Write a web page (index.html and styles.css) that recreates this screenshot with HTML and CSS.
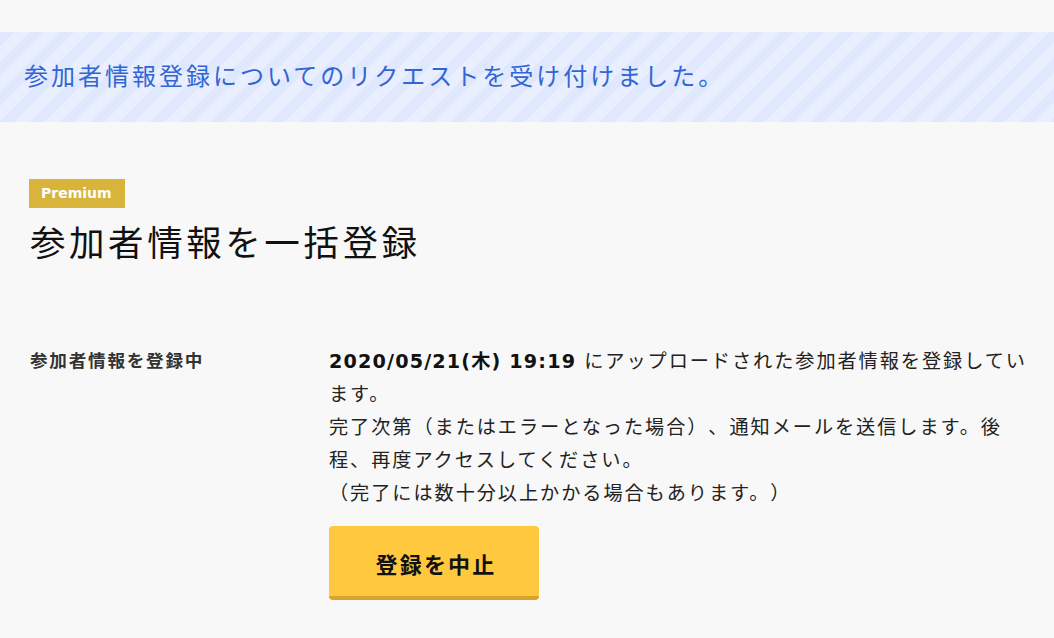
FILE: index.html
```html
<!DOCTYPE html>
<html lang="ja">
<head>
<meta charset="utf-8">
<title>参加者情報を一括登録</title>
<link rel="stylesheet" href="styles.css">
</head>
<body>
  <div class="notice">
    <p class="notice-text">参加者情報登録についてのリクエストを受け付けました。</p>
  </div>
  <main class="page">
    <span class="badge">Premium</span>
    <h1 class="title">参加者情報を一括登録</h1>
    <section class="row">
      <div class="row-label">参加者情報を登録中</div>
      <div class="row-body">
        <p class="desc"><b class="stamp">2020/05/21(木) 19:19</b> にアップロードされた参加者情報を登録しています。<br>完了次第（またはエラーとなった場合）、通知メールを送信します。後程、再度アクセスしてください。<br>（完了には数十分以上かかる場合もあります。）</p>
        <button class="btn-cancel" type="button">登録を中止</button>
      </div>
    </section>
  </main>
</body>
</html>
```
FILE: styles.css
```css
html, body {
  margin: 0;
  padding: 0;
  background: #f8f8f8;
}
body {
  font-family: "DejaVu Sans", "Noto Sans CJK JP", sans-serif;
  color: #222;
  text-spacing-trim: space-all;
}
.notice {
  margin-top: 32px;
  height: 90px;
  box-sizing: border-box;
  display: flex;
  align-items: center;
  padding: 0 24px;
  background: repeating-linear-gradient(135deg, #dfe8fd 0 10.6px, #e9effe 10.6px 21.2px);
}
.notice-text {
  margin: 0;
  font-size: 24px;
  line-height: 36px;
  letter-spacing: 3px;
  color: #3165d6;
}
.page {
  padding: 57px 14px 0 30px;
}
.badge {
  display: inline-block;
  height: 29px;
  line-height: 29px;
  padding: 0 13px 0 12px;
  background: #d8b43b;
  color: #fff;
  font-weight: bold;
  font-size: 14px;
  letter-spacing: 0;
  margin-left: -1px;
}
.title {
  margin: 11px 0 0;
  font-size: 35.5px;
  line-height: 49px;
  letter-spacing: 0.1em;
  font-weight: normal;
  color: #111;
}
.row {
  display: grid;
  grid-template-columns: 299px 1fr;
  margin-top: 77px;
}
.row-label {
  font-size: 17.6px;
  line-height: 33px;
  letter-spacing: 0.1em;
  font-weight: bold;
  color: #333;
}
.desc {
  margin: 0;
  font-size: 19.2px;
  line-height: 33px;
  letter-spacing: 0.1em;
  color: #222;
}
.stamp {
  letter-spacing: 0.06em;
  color: #111;
}
.btn-cancel {
  display: block;
  margin-top: 16px;
  width: 210px;
  height: 74px;
  box-sizing: border-box;
  border: 0;
  border-bottom: 4px solid #d8a42c;
  border-radius: 4px;
  background: #ffc83f;
  font-family: inherit;
  font-size: 22px;
  font-weight: bold;
  letter-spacing: 0.1em;
  color: #111;
  padding: 4px 0 0 4px;
}
```
